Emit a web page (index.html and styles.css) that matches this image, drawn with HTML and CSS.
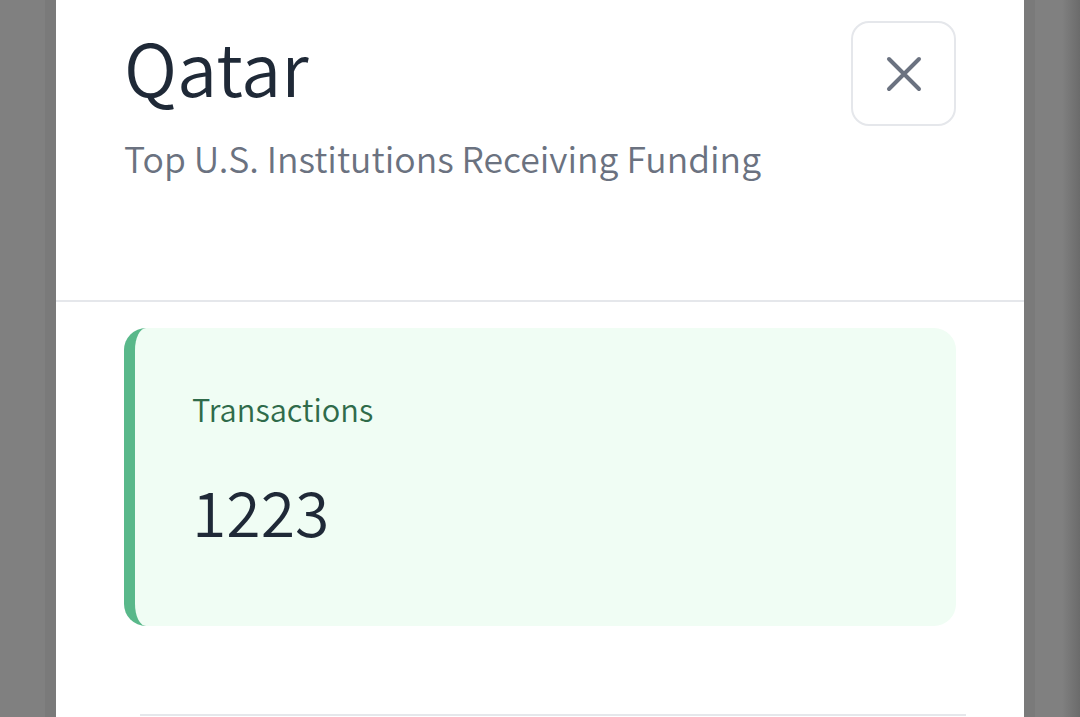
FILE: index.html
```html
<!DOCTYPE html>
<html>
<head>
<meta charset="utf-8">
<link rel="stylesheet" href="styles.css">
</head>
<body>
<div class="overlay">
  <div class="modal">
    <header class="modal-header">
      <div class="heading">
        <h1 class="title">Qatar</h1>
        <p class="subtitle">Top U.S. Institutions Receiving Funding</p>
      </div>
      <button class="close" aria-label="Close">
        <svg width="36" height="36" viewBox="0 0 36 36" fill="none" stroke="#6b7280" stroke-width="4" stroke-linecap="round">
          <path d="M3 3 L33 33 M33 3 L3 33"/>
        </svg>
      </button>
    </header>
    <div class="modal-body">
      <div class="stat-card">
        <div class="stat-label">Transactions</div>
        <div class="stat-value">1223</div>
      </div>
      <div class="next-box"></div>
    </div>
  </div>
</div>
</body>
</html>
```

FILE: styles.css
```css
html, body {
  margin: 0;
  padding: 0;
  height: 100%;
  overflow: hidden;
}
body {
  background: linear-gradient(to right, #808080 0, #808080 calc(100% - 18px), #6b6b6b 100%);
  font-family: "Noto Sans CJK SC", "Noto Sans", sans-serif;
  font-weight: 350;
}
.overlay {
  display: flex;
  height: 100%;
  padding-left: 56px;
  overflow: hidden;
}
.modal {
  width: 968px;
  height: 100%;
  background: #ffffff;
  box-shadow: 0 0 0 11px #7a7a7a;
  display: flex;
  flex-direction: column;
  overflow: hidden;
}
.modal-header {
  flex-shrink: 0;
  display: flex;
  justify-content: space-between;
  align-items: flex-start;
  height: 302px;
  box-sizing: border-box;
  padding: 21px 68px 0 68px;
  border-bottom: 2px solid #e5e7eb;
}
.heading {
  padding-top: 9px;
}
.title {
  margin: 0;
  font-size: 72px;
  font-weight: 350;
  line-height: 72px;
  color: #1f2937;
}
.subtitle {
  margin: 32px 0 0 0;
  font-size: 35.6px;
  line-height: 48px;
  color: #6b7280;
}
.close {
  flex-shrink: 0;
  width: 105px;
  height: 105px;
  box-sizing: border-box;
  border: 2px solid #e5e7eb;
  border-radius: 18px;
  background: #ffffff;
  display: flex;
  align-items: center;
  justify-content: center;
  padding: 0;
}
.modal-body {
  flex-shrink: 0;
  padding: 26px 68px 0 68px;
}
.stat-card {
  height: 298px;
  box-sizing: border-box;
  background: #f0fdf4;
  border-left: 11px solid #59b88a;
  border-radius: 22px;
  padding: 61px 57px 0 57px;
}
.stat-label {
  font-size: 30.8px;
  line-height: 40px;
  color: #2f6b4a;
}
.stat-value {
  margin-top: 41px;
  font-size: 62.5px;
  line-height: 80px;
  color: #1f2937;
}
.next-box {
  margin: 88px -10px 0 16px;
  height: 1px;
  border-top: 2px solid #e5e7eb;
}
```
